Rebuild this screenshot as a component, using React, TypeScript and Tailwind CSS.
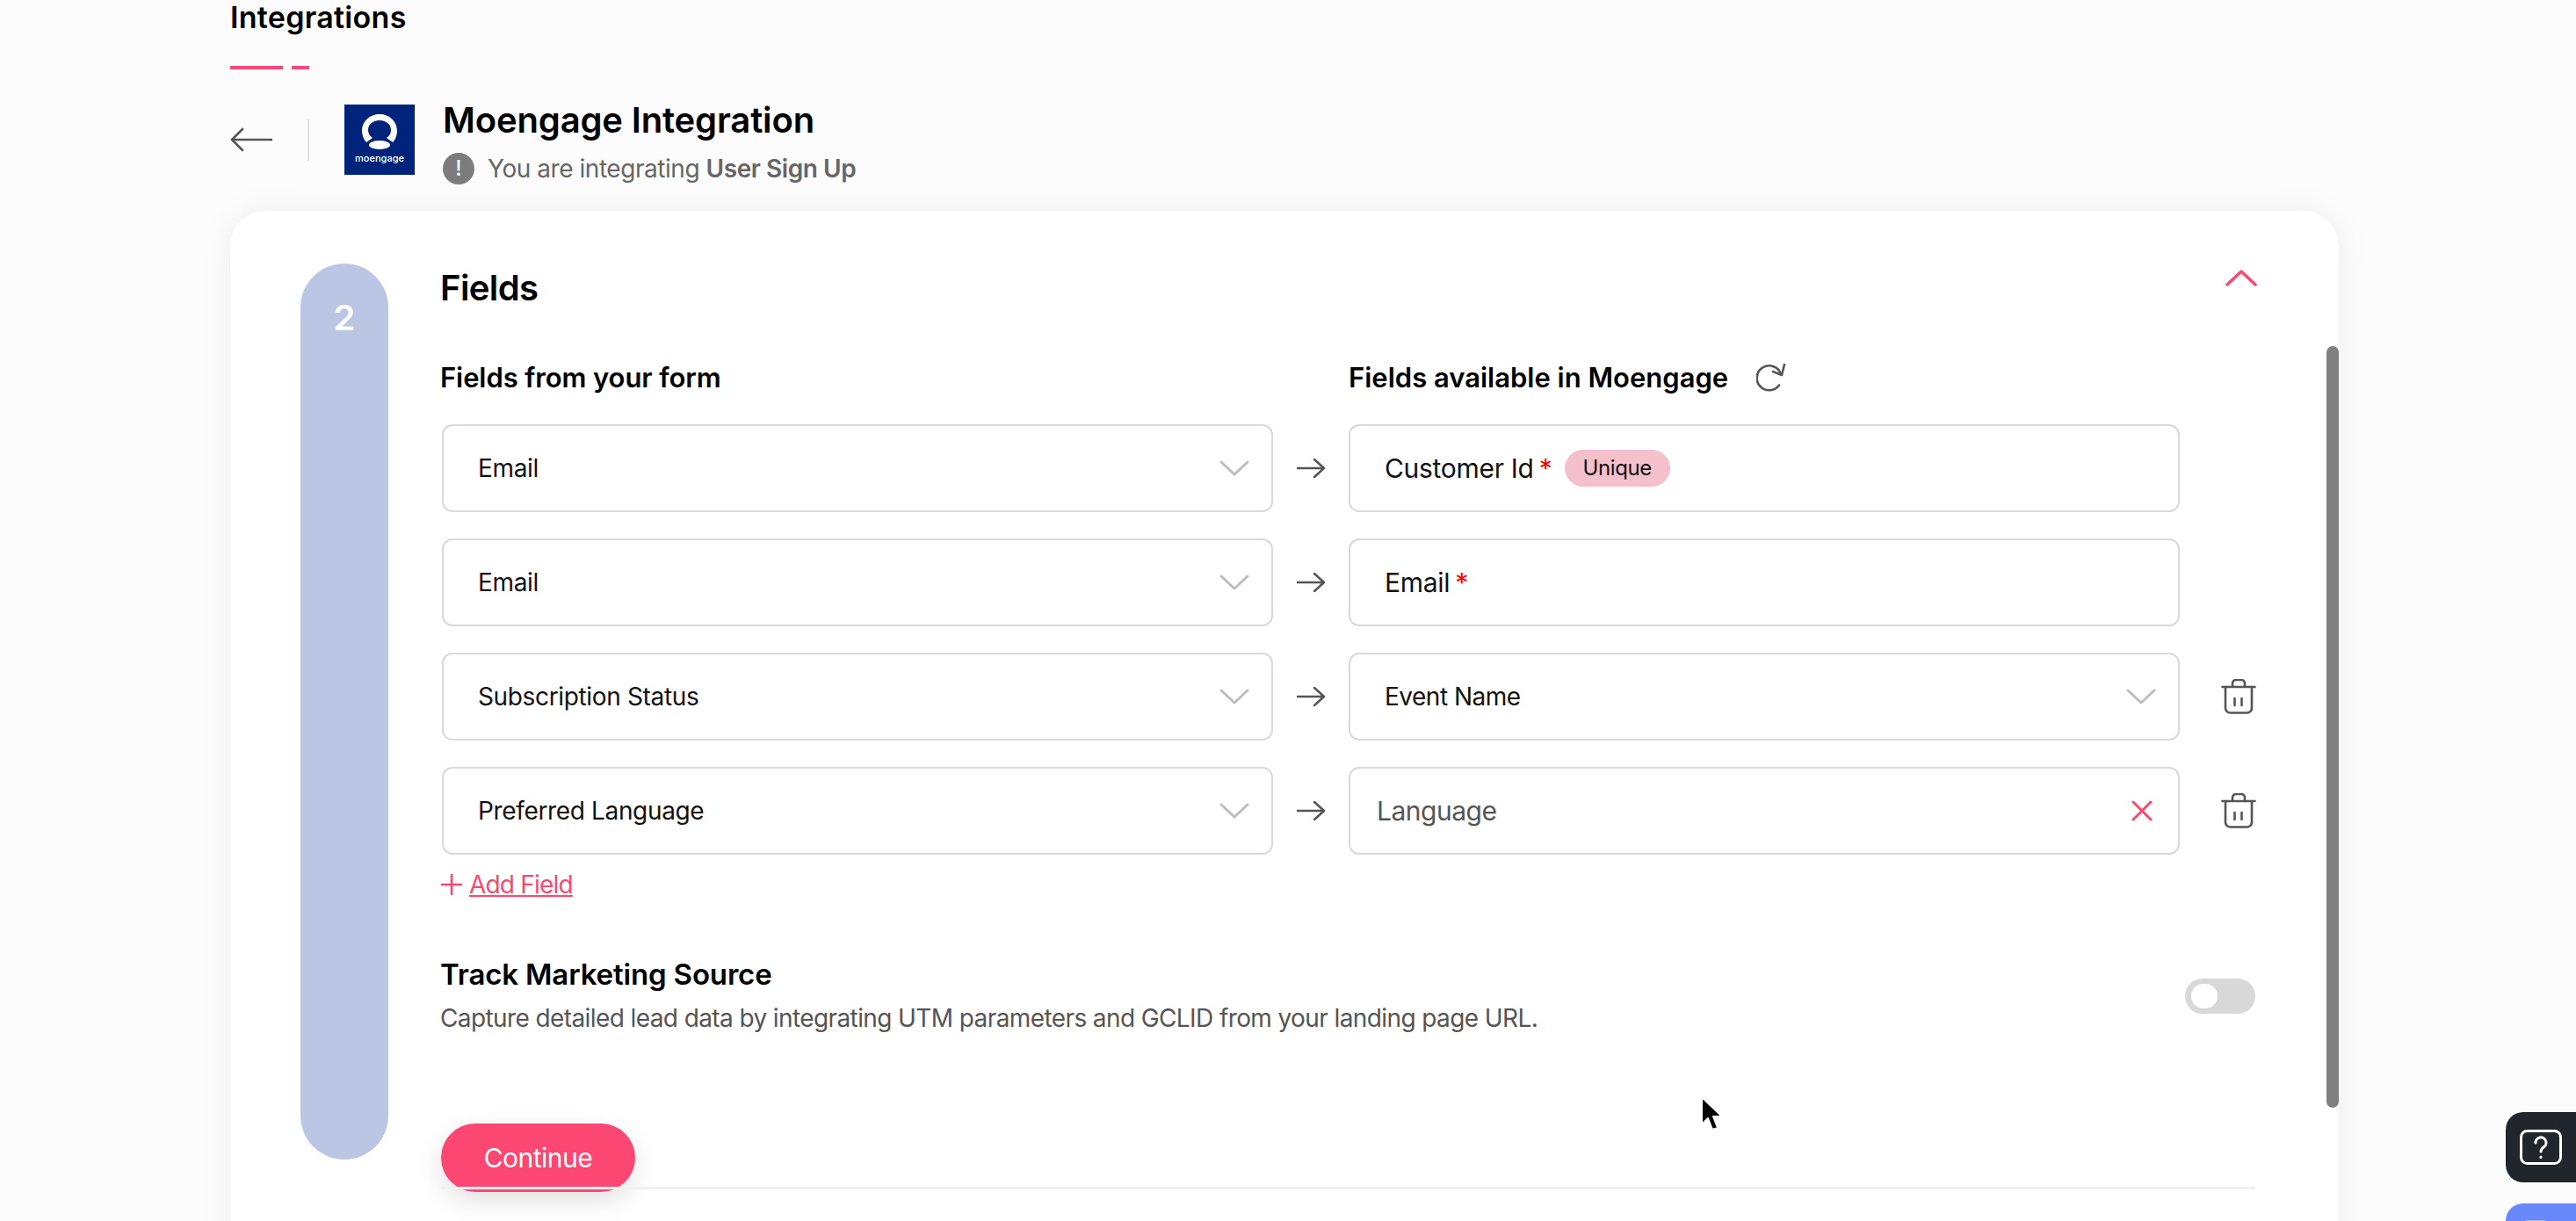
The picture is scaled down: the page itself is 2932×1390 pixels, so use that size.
const font = "[font-family:Inter,'Noto_Sans',sans-serif]";

function Chevron() {
  return (
    <svg width="34" height="20" viewBox="0 0 34 20" fill="none" stroke="#bdbdbd" strokeWidth="3" strokeLinecap="round" strokeLinejoin="round">
      <path d="M2 3l15 14L32 3" />
    </svg>
  );
}
function RowArrow() {
  return (
    <svg width="34" height="24" viewBox="0 0 34 24" fill="none" stroke="#555" strokeWidth="2.5" strokeLinecap="round" strokeLinejoin="round">
      <path d="M2 12h30M21 2l11 10-11 10" />
    </svg>
  );
}
function Trash() {
  return (
    <svg className="mr-[-1px]" width="40" height="40" viewBox="0 0 40 40" fill="none" stroke="#555" strokeWidth="2.6" strokeLinecap="round" strokeLinejoin="round">
      <path d="M1.500 9h37M13 9V5a4 4 0 0 1 4-4h6a4 4 0 0 1 4 4v4" />
      <path d="M5 9v24a5.500 5.500 0 0 0 5.500 5.500h19A5.500 5.500 0 0 0 35 33V9" />
      <path d="M15.500 22v8M23.500 22v8" />
    </svg>
  );
}
function Select({ label }: { label: string }) {
  return (
    <div className="flex h-[100px] flex-1 items-center justify-between rounded-[12px] border-2 border-[#d9d9d9] bg-white pl-[39px] pr-[25px]">
      <span className="text-[28px] tracking-[-0.35px] text-[#111]">{label}</span>
      <Chevron />
    </div>
  );
}
function Box({ children }: { children: React.ReactNode }) {
  return (
    <div className="flex h-[100px] flex-1 items-center justify-between rounded-[12px] border-2 border-[#d9d9d9] bg-white pl-[39px] pr-[25px]">
      {children}
    </div>
  );
}
function Row({ left, right, del }: { left: string; right: React.ReactNode; del?: boolean }) {
  return (
    <div className="flex items-center">
      <div className="flex w-[946px]"><Select label={left} /></div>
      <div className="flex w-[86px] justify-center"><RowArrow /></div>
      <div className="flex w-[946px]">{right}</div>
      <div className="flex w-[86px] justify-end">{del && <Trash />}</div>
    </div>
  );
}

export default function App() {
  return (
    <div className={`relative h-[1390px] w-[2932px] overflow-hidden bg-[#fcfcfc] pl-[262px] ${font}`}>
      <div className="h-[40px] text-[34px] font-semibold leading-[40px] tracking-[0.3px] text-[#000]">Integrations</div>
      <div className="mt-[35px] flex gap-[10px]">
        <div className="h-[4px] w-[60px] bg-[#fc4772]" />
        <div className="h-[4px] w-[20px] bg-[#fc4772]" />
      </div>
      <div className="mt-[40px] flex h-[80px] items-center">
        <svg width="48" height="28" viewBox="0 0 48 28" fill="none" stroke="#555" strokeWidth="2.6" strokeLinecap="round" strokeLinejoin="round">
          <path d="M47 14H2M14 2L2 14l12 12" />
        </svg>
        <div className="ml-[40px] h-[48px] w-[2px] bg-[#e2e2e2]" />
        <div className="ml-[40px] flex h-[80px] w-[80px] flex-col items-center bg-[#00237c] pt-[11px]">
          <svg width="40" height="40" viewBox="0 0 40 40">
            <path fillRule="evenodd" fill="#fff" d="M20 0C31 0 40 8 40 19c0 5-2 10-5 13l-7-5c3-2 5-5 5-9 0-7-6-11-13-11S7 11 7 18c0 4 2 7 5 9l-7 5C2 29 0 24 0 19 0 8 9 0 20 0z" />
            <ellipse cx="20" cy="35" rx="12" ry="5" fill="#fff" />
          </svg>
          <span className="mt-[3px] text-[11px] font-medium leading-[14px] text-white">moengage</span>
        </div>
        <div className="ml-[32px] flex flex-col pt-[4px]">
          <div className="text-[40px] font-semibold leading-[48px] tracking-[-0.15px] text-[#000]">Moengage Integration</div>
          <div className="mt-[13px] flex items-center">
            <div className="flex h-[36px] w-[36px] items-center justify-center rounded-full bg-[#7c7c7c] text-[24px] font-medium leading-none text-white">!</div>
            <span className="ml-[15px] text-[28px] leading-[36px] tracking-[-0.45px] text-[#666]">You are integrating <span className="font-semibold">User Sign Up</span></span>
          </div>
        </div>
      </div>

      <div className="relative mt-[41px] flex h-[1400px] w-[2400px] rounded-[40px] bg-white pl-[80px] pt-[60px] shadow-[0_0_40px_rgba(0,0,0,0.06)]">
        <div className="flex h-[1020px] w-[100px] shrink-0 justify-center rounded-full bg-[#bac6e4] pt-[38px]">
          <span className="text-[40px] font-semibold leading-[48px] text-white">2</span>
        </div>
        <div className="ml-[61px] flex w-[2064px] flex-col">
          <div className="flex items-start justify-between pt-[4px]">
            <div className="ml-[-2px] text-[40px] font-semibold leading-[48px] tracking-[-0.6px] text-[#000]">Fields</div>
            <svg className="mr-[-2px] mt-[2px]" width="36" height="20" viewBox="0 0 36 20" fill="none" stroke="#fc4772" strokeWidth="3.5" strokeLinecap="round" strokeLinejoin="round">
              <path d="M2 18L18 3l16 15" />
            </svg>
          </div>
          <div className="mt-[58px] flex h-[40px] items-center">
            <div className="ml-[-2px] w-[1034px] text-[31px] font-semibold tracking-[-0.1px] text-[#000]">Fields from your form</div>
            <div className="text-[31px] font-semibold text-[#000]">Fields available in Moengage</div>
            <svg className="ml-[32px]" width="34" height="32" viewBox="0 0 34 32" fill="none" stroke="#555" strokeWidth="2.6" strokeLinecap="round" strokeLinejoin="round">
              <path d="M26 24.500A14 14 0 1 1 28 12" />
              <path d="M32 1l-3 12-10-4" />
            </svg>
          </div>
          <div className="mt-[33px] flex flex-col gap-[30px]">
            <Row left="Email" right={
              <Box>
                <div className="flex items-center">
                  <span className="text-[30px] tracking-[-0.3px] text-[#111]">Customer Id</span>
                  <span className="ml-[6px] text-[30px] text-[#f00]">*</span>
                  <span className="ml-[14px] flex h-[42px] w-[120px] items-center justify-center rounded-full bg-[#f4c0cb] text-[24px] tracking-[-0.4px] text-[#111]">Unique</span>
                </div>
              </Box>
            } />
            <Row left="Email" right={
              <Box>
                <div className="flex items-center">
                  <span className="text-[30px] tracking-[-0.3px] text-[#111]">Email</span>
                  <span className="ml-[6px] text-[30px] text-[#f00]">*</span>
                </div>
              </Box>
            } />
            <Row del left="Subscription Status" right={
              <Box>
                <span className="text-[28px] tracking-[-0.5px] text-[#111]">Event Name</span>
                <Chevron />
              </Box>
            } />
            <Row del left="Preferred Language" right={
              <div className="flex h-[100px] flex-1 items-center justify-between rounded-[12px] border-2 border-[#d9d9d9] bg-white pl-[30px] pr-[29px]">
                <span className="text-[30px] tracking-[-0.5px] text-[#555]">Language</span>
                <svg width="24" height="24" viewBox="0 0 24 24" fill="none" stroke="#fc4772" strokeWidth="3" strokeLinecap="round">
                  <path d="M2 2l20 20M22 2L2 22" />
                </svg>
              </div>
            } />
          </div>
          <div className="ml-[-1px] mt-[16px] flex h-[36px] items-center text-[#fc4772]">
            <svg width="24" height="24" viewBox="0 0 24 24" fill="none" stroke="#fc4772" strokeWidth="2.6" strokeLinecap="round">
              <path d="M12 1v22M1 12h22" />
            </svg>
            <span className="ml-[8px] text-[28px] tracking-[-0.8px] underline">Add Field</span>
          </div>
          <div className="mt-[64px] flex items-center justify-between">
            <div className="ml-[-2px] flex flex-col">
              <div className="text-[33px] font-semibold leading-[40px] tracking-[-0.15px] text-[#000]">Track Marketing Source</div>
              <div className="mt-[10px] text-[28px] leading-[40px] tracking-[-0.6px] text-[#555]">Capture detailed lead data by integrating UTM parameters and GCLID from your landing page URL.</div>
            </div>
            <div className="flex h-[40px] w-[80px] items-center rounded-full bg-[#d8d8d8] pl-[7px]">
              <div className="h-[28px] w-[30px] rounded-full bg-white" />
            </div>
          </div>
          <div className="relative mt-[100px]">
            <div className="ml-[-1px] flex h-[78px] w-[221px] items-center justify-center rounded-full bg-[#fc4772] text-[30px] tracking-[-0.5px] text-white shadow-[0_10px_30px_rgba(0,0,0,0.12)]">Continue</div>
            <div className="absolute left-[-1px] right-0 top-[72px] h-[3px] bg-[#f1f1f1]" />
          </div>
        </div>
        <div className="absolute right-0 top-[154px] h-[867px] w-[14px] rounded-full bg-[#808080]" />
      </div>

      <svg className="absolute left-[1934px] top-[1247px]" width="28" height="42" viewBox="0 0 28 42">
        <path d="M3 2v31l7-7 5 13 6-2-5-13h10z" fill="#000" stroke="#fff" strokeWidth="2" strokeLinejoin="round" />
      </svg>

      <div className="absolute right-0 top-[1266px] flex h-[80px] w-[80px] items-center rounded-l-[20px] bg-[#21262d] pl-[16px]">
        <svg width="48" height="40" viewBox="0 0 48 40" fill="none" stroke="#fff" strokeWidth="3" strokeLinecap="round" strokeLinejoin="round">
          <rect x="1.500" y="1.500" width="45" height="37" rx="7" />
          <path d="M18 15a6 6 0 1 1 9 5c-2 1.500-3 2.500-3 5" />
          <path d="M24 31v0.500" />
        </svg>
      </div>
      <div className="absolute right-0 top-[1370px] h-[40px] w-[80px] rounded-l-[20px] bg-[#6888fb]">
        <div className="ml-[23px] mt-[19px] h-[1px] w-[22px] bg-[#a9bbff]" />
      </div>
    </div>
  );
}
